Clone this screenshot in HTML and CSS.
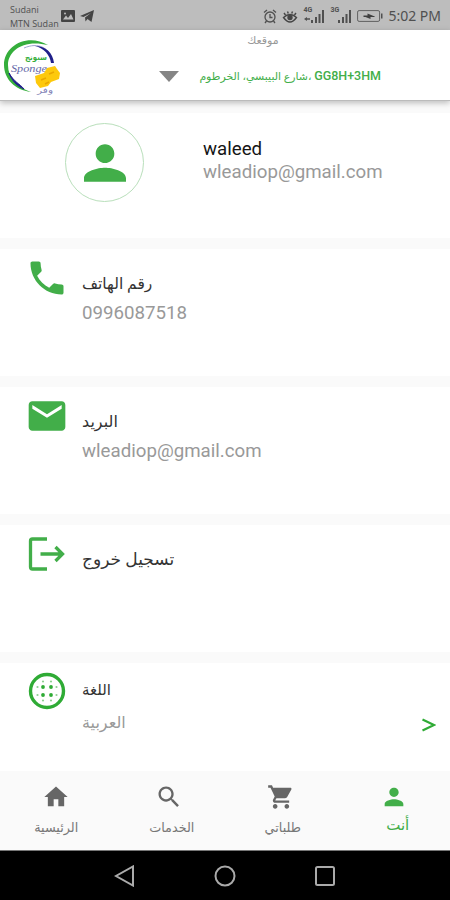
FILE: index.html
```html
<!DOCTYPE html>
<html lang="ar">
<head>
    <meta charset="UTF-8">
    <meta name="viewport" content="width=device-width, initial-scale=1.0">
    <title>Sponge</title>
    <link rel="stylesheet" href="styles.css">
</head>
<body>

    <!-- Phone status bar -->
    <div class="status-bar">
        <div class="carriers">
            <div>Sudani</div>
            <div>MTN Sudan</div>
        </div>
        <svg class="status-photo" width="14" height="12" viewBox="0 0 14 12">
            <rect width="14" height="12" rx="1" fill="#444"/>
            <path d="M2 9.500l3-4 2 2.500 3-4 2.500 5.500z" fill="#bdbdbd"/>
            <circle cx="4" cy="3.500" r="1" fill="#bdbdbd"/>
        </svg>
        <svg class="status-plane" width="15" height="14" viewBox="0 0 15 14">
            <path d="M0 7L14 1l-2.500 12-4-3-2 2.500L5 8.500 11 4 3.500 8z" fill="#444"/>
        </svg>
        <div class="status-right">
            <svg width="14" height="15" viewBox="0 0 14 15" fill="none" stroke="#505050" stroke-width="1.300">
                <circle cx="7" cy="8" r="5"/>
                <path d="M1 3.500L4 1M13 3.500L10 1M7 5v3.500h2.500M3.500 12l-1.500 2M10.500 12l1.500 2"/>
            </svg>
            <svg width="16" height="15" viewBox="0 0 16 15" fill="none" stroke="#454545" stroke-width="1.400">
                <path d="M1.500 8.500q6.500-6 13 0q-6.500 9-13 0zM2 4l1.500 2M5.500 2.500l.8 2M10.500 2.500l-.8 2M14 4l-1.500 2"/>
                <circle cx="8" cy="8.500" r="2" fill="#454545"/>
            </svg>
            <div class="signal">
                <span>4G</span>
                <svg width="22" height="14" viewBox="0 0 22 14" fill="#505050">
                    <path d="M1 10l3-2v1.300h3v1.400H4V12zM8 11h2v3H8zM12 8h2v6h-2zM15.500 5h2v9h-2zM19 1h2v13h-2z"/>
                </svg>
            </div>
            <div class="signal">
                <span>3G</span>
                <svg width="22" height="14" viewBox="0 0 22 14" fill="#505050">
                    <path d="M8 11h2v3H8zM12 8h2v6h-2zM15.500 5h2v9h-2zM19 1h2v13h-2z"/>
                </svg>
            </div>
            <svg class="battery" width="26" height="12" viewBox="0 0 26 12">
                <rect x=".6" y=".6" width="22" height="10.800" rx="1.500" fill="none" stroke="#606060"/>
                <path d="M24 3.500h1.500v5H24z" fill="#505050"/>
                <path d="M6.500 5.500h4V3.500l6 2.500h1v1h-4v2l-5-2h-2z" fill="#404040"/>
            </svg>
            <span class="clock">5:02 PM</span>
        </div>
    </div>

    <!-- App header -->
    <header class="header">
        <svg class="logo" width="60" height="58" viewBox="0 0 60 58">
            <path d="M44 7C24-5 0 7 0 27c0 14 11 25 27 27C13 49 4 40 4 27 4 13 19 1 44 7z" fill="#35ae3c"/>
            <path d="M20 10C34 4 46 9 49 25" fill="none" stroke="#9fa4d0" stroke-width="1"/>
            <path d="M31 8c11 0 18 7 19 17h-3C46 17 40 10 31 8z" fill="#20208a"/>
            <path d="M5 35c3 8 8 13 15 16-4-5-10-7-15-16z" fill="#20208a" stroke="#20208a"/>
            <text x="21" y="22" class="logo-arabic" textLength="22" lengthAdjust="spacingAndGlyphs">سبونج</text>
            <text x="7" y="34" class="logo-latin" textLength="36" lengthAdjust="spacingAndGlyphs">Sponge</text>
            <path d="M31 38l9-3 3-5 8-2 2 3 3 4-1 6-8 3-3 4-8 2-4-5z" fill="#fdc90c"/>
            <path d="M37 42l5-2M45 36l5-2M41 46l4-2" stroke="#e9a800" stroke-width="1.500"/>
            <text x="33" y="55" class="logo-small" textLength="16" lengthAdjust="spacingAndGlyphs">وفر</text>
        </svg>
        <div class="location">
            <div class="location-label">موقعك</div>
            <div class="location-row">
                <svg width="20" height="11" viewBox="0 0 20 11"><path d="M0 0h20L10 11z" fill="#858585"/></svg>
                <div class="address" dir="rtl"><b>GG8H+3HM</b> <span>،شارع البيبسي، الخرطوم</span></div>
            </div>
        </div>
    </header>

    <main>
        <section class="card profile">
            <div class="avatar">
                <svg width="56" height="56" viewBox="0 0 24 24"><path fill="#42ae49" d="M12 12c2.210 0 4-1.790 4-4s-1.790-4-4-4-4 1.790-4 4 1.790 4 4 4zm0 2c-3 0-9 1.350-9 4.500V20h18v-1.500c0-3.150-6-4.500-9-4.500z"/></svg>
            </div>
            <div class="profile-text">
                <div class="name">waleed</div>
                <div class="value">wleadiop@gmail.com</div>
            </div>
        </section>

        <section class="card">
            <svg class="icon" width="44" height="44" viewBox="0 0 24 24"><path fill="#42ae49" d="M6.620 10.790c1.440 2.830 3.760 5.140 6.590 6.590l2.200-2.200c.27-.27.67-.36 1.020-.24 1.120.37 2.330.57 3.570.57.55 0 1 .45 1 1V20c0 .55-.45 1-1 1-9.390 0-17-7.610-17-17 0-.55.45-1 1-1h3.500c.55 0 1 .45 1 1 0 1.250.2 2.450.57 3.570.11.35.03.74-.25 1.020l-2.200 2.200z"/></svg>
            <div class="card-text">
                <div class="title phone">رقم الهاتف</div>
                <div class="value">0996087518</div>
            </div>
        </section>

        <section class="card">
            <svg class="icon" width="44" height="44" viewBox="0 0 24 24"><path fill="#42ae49" d="M20 4H4c-1.100 0-1.990.9-1.990 2L2 18c0 1.100.9 2 2 2h16c1.100 0 2-.9 2-2V6c0-1.100-.9-2-2-2zm0 4l-8 5-8-5V6l8 5 8-5v2z"/></svg>
            <div class="card-text">
                <div class="title mail">البريد</div>
                <div class="value">wleadiop@gmail.com</div>
            </div>
        </section>

        <section class="card">
            <svg class="icon" width="44" height="44" viewBox="0 0 44 44" fill="none" stroke="#42ae49" stroke-width="3.300">
                <path d="M22 7H7.500q-2 0-2 2v26q0 2 2 2H22M15.500 22H37.500M30.500 15l7 7-7 7"/>
            </svg>
            <div class="card-text">
                <div class="title">تسجيل خروج</div>
            </div>
        </section>

        <section class="card language">
            <svg class="icon" width="44" height="44" viewBox="0 0 44 44">
                <circle cx="22" cy="22" r="16.500" fill="none" stroke="#2fab35" stroke-width="3.400"/>
                <g fill="#2fab35">
                    <circle cx="18" cy="18" r="1.900"/><circle cx="26" cy="18" r="1.900"/>
                    <circle cx="18" cy="26" r="1.900"/><circle cx="26" cy="26" r="1.900"/>
                </g>
                <g fill="#8fcf92">
                    <circle cx="18" cy="12.500" r="1.100"/><circle cx="26" cy="12.500" r="1.100"/>
                    <circle cx="18" cy="31.500" r="1.100"/><circle cx="26" cy="31.500" r="1.100"/>
                    <circle cx="12.500" cy="18" r="1.100"/><circle cx="12.500" cy="26" r="1.100"/>
                    <circle cx="31.500" cy="18" r="1.100"/><circle cx="31.500" cy="26" r="1.100"/>
                </g>
            </svg>
            <div class="card-text">
                <div class="title">اللغة</div>
                <div class="value">العربية</div>
            </div>
            <svg class="arrow" width="14" height="14" viewBox="0 0 14 14"><path d="M.5 1.500L12 7 .5 12.500" fill="none" stroke="#2fab35" stroke-width="2.200"/></svg>
        </section>
    </main>

    <!-- Bottom tabs -->
    <nav class="tabs">
        <div class="tab">
            <svg width="28" height="28" viewBox="0 0 24 24"><path d="M10 20v-6h4v6h5v-8h3L12 3 2 12h3v8z"/></svg>
            <span>الرئيسية</span>
        </div>
        <div class="tab services">
            <svg width="28" height="28" viewBox="0 0 24 24"><path d="M15.500 14h-.79l-.28-.27C15.410 12.590 16 11.110 16 9.500 16 5.910 13.090 3 9.500 3S3 5.910 3 9.500 5.910 16 9.500 16c1.610 0 3.090-.59 4.230-1.570l.27.28v.79l5 4.990L20.490 19l-4.990-5zm-6 0C7.010 14 5 11.990 5 9.500S7.010 5 9.500 5 14 7.010 14 9.500 11.990 14 9.500 14z"/></svg>
            <span>الخدمات</span>
        </div>
        <div class="tab orders">
            <svg width="28" height="28" viewBox="0 0 24 24"><path d="M7 18c-1.100 0-1.990.9-1.990 2S5.900 22 7 22s2-.9 2-2-.9-2-2-2zM1 2v2h2l3.600 7.590-1.350 2.450c-.16.28-.25.61-.25.96 0 1.100.9 2 2 2h12v-2H7.420c-.14 0-.25-.11-.25-.25l.03-.12.9-1.630h7.450c.75 0 1.410-.41 1.750-1.030l3.580-6.490c.08-.14.12-.31.12-.48 0-.55-.45-1-1-1H5.210l-.94-2H1zm16 16c-1.100 0-1.990.9-1.990 2s.89 2 1.990 2 2-.9 2-2-.9-2-2-2z"/></svg>
            <span>طلباتي</span>
        </div>
        <div class="tab active">
            <svg width="28" height="28" viewBox="0 0 24 24"><path d="M12 12c2.210 0 4-1.790 4-4s-1.790-4-4-4-4 1.790-4 4 1.790 4 4 4zm0 2c-2.670 0-8 1.340-8 4v2h16v-2c0-2.660-5.330-4-8-4z"/></svg>
            <span>أنت</span>
        </div>
    </nav>

    <!-- Android navigation -->
    <div class="android-nav">
        <svg width="22" height="22" viewBox="0 0 22 22"><path d="M19 1.500v19L2 11z"/></svg>
        <svg width="22" height="22" viewBox="0 0 22 22"><circle cx="11" cy="11" r="9.500"/></svg>
        <svg width="22" height="22" viewBox="0 0 22 22"><rect x="2" y="2" width="18" height="18" rx="1.500"/></svg>
    </div>

</body>
</html>
```
FILE: styles.css
```css
/* General */
* {
    box-sizing: border-box;
}

body {
    margin: 0;
    width: 450px;
    height: 900px;
    overflow: hidden;
    display: flex;
    flex-direction: column;
    background: #fafafa;
    font-family: Roboto, "DejaVu Sans", sans-serif;
}

svg {
    display: block;
    flex-shrink: 0;
}

/* Status bar */
.status-bar {
    height: 30px;
    flex-shrink: 0;
    display: flex;
    align-items: center;
    padding: 2px 9px 0 10px;
    background: #bdbdbd;
    color: #505050;
}

.carriers {
    width: 51px;
    padding-top: 1px;
    font: 9px/14px "Open Sans", sans-serif;
    white-space: nowrap;
}

.status-plane {
    margin-left: 5px;
}

.status-right {
    margin-left: auto;
    display: flex;
    align-items: center;
    gap: 5px;
}

.signal {
    position: relative;
}

.signal span {
    position: absolute;
    left: 0;
    top: -3px;
    font-size: 7px;
    font-weight: bold;
}

.clock {
    font: 14px/20px "Noto Sans", sans-serif;
    white-space: nowrap;
}

/* Header */
.header {
    position: relative;
    height: 71px;
    flex-shrink: 0;
    display: flex;
    padding: 8px 0 0 4px;
    background: #fff;
    border-bottom: 1px solid #bbb;
    box-shadow: 0 2px 6px rgba(0, 0, 0, 0.25);
}

.logo-arabic {
    font: bold 8px "DejaVu Sans", sans-serif;
    fill: #35ae3c;
}

.logo-latin {
    font: italic 11px "Liberation Serif", serif;
    fill: #6468a8;
}

.logo-small {
    font: 8px "DejaVu Sans", sans-serif;
    fill: #8080b5;
}

.location {
    width: 222px;
    margin-left: 95px;
}

.location-label {
    margin-top: -7px;
    padding-right: 14px;
    font-size: 11px;
    line-height: 20px;
    text-align: center;
    color: #999;
}

.location-row {
    display: flex;
    align-items: center;
    justify-content: space-between;
    margin-top: 15px;
}

.address {
    font-size: 10.9px;
    line-height: 20px;
    white-space: nowrap;
    color: #42ae49;
}

.address b {
    font-size: 12.5px;
    font-weight: 500;
}

/* Cards */
main {
    height: 670px;
    flex-shrink: 0;
    display: flex;
    flex-direction: column;
    gap: 11px;
    padding-top: 12px;
}

.card {
    height: 127px;
    flex-shrink: 0;
    display: flex;
    padding: 7px 14px 0 25px;
    background: #fff;
}

.profile {
    height: 125px;
    padding: 10px 0 0 65px;
}

.avatar {
    width: 79px;
    height: 79px;
    display: flex;
    align-items: center;
    justify-content: center;
    border: 1px solid #b9dfbb;
    border-radius: 50%;
}

.profile-text {
    margin: 14px 0 0 59px;
}

.name {
    font-size: 18.7px;
    line-height: 24px;
    color: #151515;
}

.value {
    font-size: 18.7px;
    line-height: 22px;
    color: #999;
}

.card-text {
    margin: 14px 0 0 13px;
}

.title {
    font-size: 17px;
    line-height: 26px;
    margin-bottom: 6px;
    color: #333;
}

.phone,
.mail {
    padding-top: 1px;
    margin-bottom: 5px;
}

.phone {
    font-size: 15.5px;
}

.mail {
    font-size: 16px;
}

.language {
    height: 108px;
    padding-top: 6px;
}

.language .card-text {
    margin-top: 8px;
}

.language .title {
    margin-bottom: 9px;
    font-size: 15px;
}

.language .value {
    font-size: 16px;
}

.arrow {
    margin: 49px 0 0 auto;
}

/* Bottom tabs */
.tabs {
    height: 80px;
    flex-shrink: 0;
    display: flex;
    background: #fafafa;
    border-bottom: 1px solid #777;
}

.tab {
    width: 112.5px;
    display: flex;
    flex-direction: column;
    align-items: center;
    padding-top: 12px;
    font-size: 12.8px;
    line-height: 20px;
    color: #777;
    fill: #666;
}

.tab span {
    margin-top: 7px;
}

.services span {
    padding-left: 6px;
}

.orders span {
    padding-left: 3px;
}

.active {
    font-size: 15px;
    color: #42ae49;
    fill: #42ae49;
}

.active span {
    margin-top: 4px;
    padding-left: 8px;
}

/* Android navigation */
.android-nav {
    height: 49px;
    flex-shrink: 0;
    display: flex;
    align-items: center;
    justify-content: center;
    gap: 78px;
    background: #000;
    fill: none;
    stroke: #aaa;
    stroke-width: 2;
}
```
